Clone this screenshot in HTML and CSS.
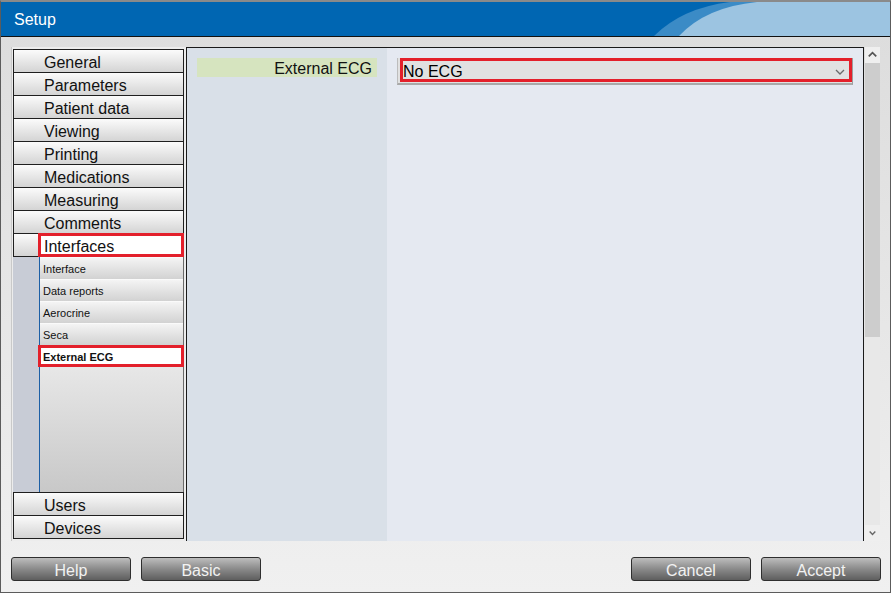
FILE: index.html
```html
<!DOCTYPE html>
<html>
<head>
<meta charset="utf-8">
<title>Setup</title>
<link rel="stylesheet" href="styles.css">
</head>
<body>
<div class="window">
  <div class="titlebar">
    <span class="title">Setup</span>
    <svg class="swoosh" width="236" height="34" viewBox="0 0 236 34">
      <path d="M0,34 Q28,6 76,0 L236,0 L236,34 Z" fill="#3b8bc6"/>
      <path d="M25,34 Q52,5 103,0 L236,0 L236,34 Z" fill="#9cc4e1"/>
    </svg>
  </div>
  <div class="body">
    <div class="content">
      <div class="nav">
        <div class="nav-item first">General</div>
        <div class="nav-item">Parameters</div>
        <div class="nav-item">Patient data</div>
        <div class="nav-item">Viewing</div>
        <div class="nav-item">Printing</div>
        <div class="nav-item">Medications</div>
        <div class="nav-item">Measuring</div>
        <div class="nav-item">Comments</div>
        <div class="nav-open">
          <div class="stub"></div>
          <div class="nav-selected">Interfaces</div>
        </div>
        <div class="sub">
          <div class="sub-strip"></div>
          <div class="sub-list">
            <div class="sub-item">Interface</div>
            <div class="sub-item">Data reports</div>
            <div class="sub-item">Aerocrine</div>
            <div class="sub-item">Seca</div>
            <div class="sub-item selected">External ECG</div>
            <div class="sub-fill"></div>
          </div>
        </div>
        <div class="nav-item">Users</div>
        <div class="nav-item">Devices</div>
      </div>
      <div class="main">
        <div class="label-col">
          <div class="field-label">External ECG</div>
        </div>
        <div class="value-col">
          <div class="select">
            <div class="select-inner">
              <span>No ECG</span>
              <svg class="chev" width="10" height="6" viewBox="0 0 10 6"><polyline points="1,1 5,5 9,1" fill="none" stroke="#6a6a6a" stroke-width="1.3"/></svg>
            </div>
          </div>
        </div>
      </div>
      <div class="scrollbar">
        <div class="sb-btn"><svg width="16" height="16" viewBox="0 0 16 16"><polyline points="4,9.5 8,5.5 12,9.5" fill="none" stroke="#555" stroke-width="1.8"/></svg></div>
        <div class="sb-thumb"></div>
        <div class="sb-track"></div>
        <div class="sb-btn"><svg width="16" height="16" viewBox="0 0 16 16"><polyline points="5,6.5 8,9.5 11,6.5" fill="none" stroke="#666" stroke-width="1.5"/></svg></div>
      </div>
    </div>
    <div class="actions">
      <div class="btn">Help</div>
      <div class="btn">Basic</div>
      <div class="spacer"></div>
      <div class="btn">Cancel</div>
      <div class="btn">Accept</div>
    </div>
  </div>
</div>
</body>
</html>
```
FILE: styles.css
```css
html, body {
  margin: 0;
  padding: 0;
  background: #ffffff;
}
body {
  font-family: "Liberation Sans", Arial, sans-serif;
  color: #111;
}
.window {
  width: 891px;
  height: 593px;
  box-sizing: border-box;
  border: 1px solid #5c5c5c;
  border-top: 2px solid #8a8a8a;
  display: flex;
  flex-direction: column;
  background: linear-gradient(#dcdcdc, #f0f0f0);
}
.titlebar {
  height: 35px;
  box-sizing: border-box;
  border-bottom: 1px solid #111;
  background: #0066b2;
  display: flex;
  justify-content: space-between;
  align-items: flex-start;
}
.title {
  color: #ffffff;
  font-size: 16px;
  line-height: 35px;
  padding-left: 13px;
}
.swoosh {
  display: block;
}
.body {
  flex: 1;
  padding: 10px 9px 0 10px;
  display: flex;
  flex-direction: column;
}
.content {
  height: 494px;
  display: flex;
}
.nav {
  width: 175px;
  box-sizing: border-box;
  padding: 2px 2px 2px 1px;
  display: flex;
  flex-direction: column;
  background: #ececec;
  border-left: 1px solid #c9c9c9;
}
.nav-item {
  height: 24px;
  box-sizing: border-box;
  margin-top: -1px;
  border: 1px solid #1f1f1f;
  padding: 3px 0 0 30px;
  font-size: 16px;
  line-height: 19px;
  background: linear-gradient(#fbfbfb, #d4d4d4);
  white-space: nowrap;
}
.nav-item.first {
  margin-top: 0;
}
.nav-open {
  height: 24px;
  margin-top: -1px;
  display: flex;
}
.stub {
  width: 25px;
  box-sizing: border-box;
  border: 1px solid #1f1f1f;
  border-right: none;
  background: linear-gradient(#fbfbfb, #d4d4d4);
}
.nav-selected {
  flex: 1;
  box-sizing: border-box;
  border: 3px solid #e3202b;
  background: #ffffff;
  padding: 3px 0 0 3px;
  font-size: 16px;
  line-height: 15px;
}
.sub {
  flex: 1;
  display: flex;
}
.sub-strip {
  width: 26px;
  background: #c8ccd6;
  border-right: 1px solid #1c5fa6;
}
.sub-list {
  flex: 1;
  display: flex;
  flex-direction: column;
  border-right: 1px solid #6a6a6a;
}
.sub-item {
  height: 22px;
  box-sizing: border-box;
  padding-left: 3px;
  font-size: 11px;
  line-height: 22px;
  background: linear-gradient(#f4f4f4, #d2d2d2);
  border-top: 1px solid #fafafa;
}
.sub-item.selected {
  margin-left: -2px;
  margin-right: -1px;
  border: 3px solid #e3202b;
  background: #ffffff;
  font-weight: bold;
  padding: 3px 0 0 2px;
  line-height: 13px;
}
.sub-fill {
  flex: 1;
  background: linear-gradient(#e7e7e7, #c8c8c8);
  margin-bottom: 1px;
}
.main {
  width: 678px;
  box-sizing: border-box;
  border-left: 1px solid #1a1a1a;
  border-top: 1px solid #1a1a1a;
  border-right: 1px solid #1a1a1a;
  display: flex;
}
.label-col {
  width: 200px;
  background: #d9e0e8;
  padding: 10px 0 0 10px;
  box-sizing: border-box;
}
.field-label {
  width: 180px;
  height: 19px;
  background: #d6e4bf;
  text-align: right;
  box-sizing: border-box;
  padding: 2px 5px 0 0;
  font-size: 16px;
  line-height: 17px;
}
.value-col {
  flex: 1;
  background: #e5e9f1;
  padding: 10px 0 0 10px;
}
.select {
  width: 456px;
  height: 27px;
  box-sizing: border-box;
  background: #e1e1e1;
  border: 1px solid #bcbcbc;
  border-right-color: #9d9d9d;
  border-bottom: 2px solid #a9a9a9;
  border-top: none;
  padding: 0 0 0 2px;
}
.select-inner {
  height: 24px;
  box-sizing: border-box;
  border: 3px solid #e3202b;
  display: flex;
  align-items: center;
  justify-content: space-between;
  padding: 4px 4px 0 0;
  font-size: 16px;
  color: #000;
}
.chev {
  display: block;
}
.scrollbar {
  width: 15px;
  margin-left: 1px;
  display: flex;
  flex-direction: column;
  background: #e8e8e8;
}
.sb-btn {
  height: 16px;
  background: #efefef;
}
.sb-btn svg {
  display: block;
  width: 15px;
}
.sb-thumb {
  height: 274px;
  background: #cdcdcd;
}
.sb-track {
  flex: 1;
}
.actions {
  margin-top: 16px;
  height: 24px;
  display: flex;
  gap: 10px;
}
.spacer {
  flex: 1;
}
.btn {
  width: 120px;
  box-sizing: border-box;
  border: 1px solid #2e2e2e;
  border-radius: 3px;
  background: linear-gradient(#bdbdbd, #8a8a8a 50%, #5e5e5e);
  color: #f2f2f2;
  font-size: 16px;
  padding-top: 3px;
  line-height: 19px;
  text-align: center;
}
```
